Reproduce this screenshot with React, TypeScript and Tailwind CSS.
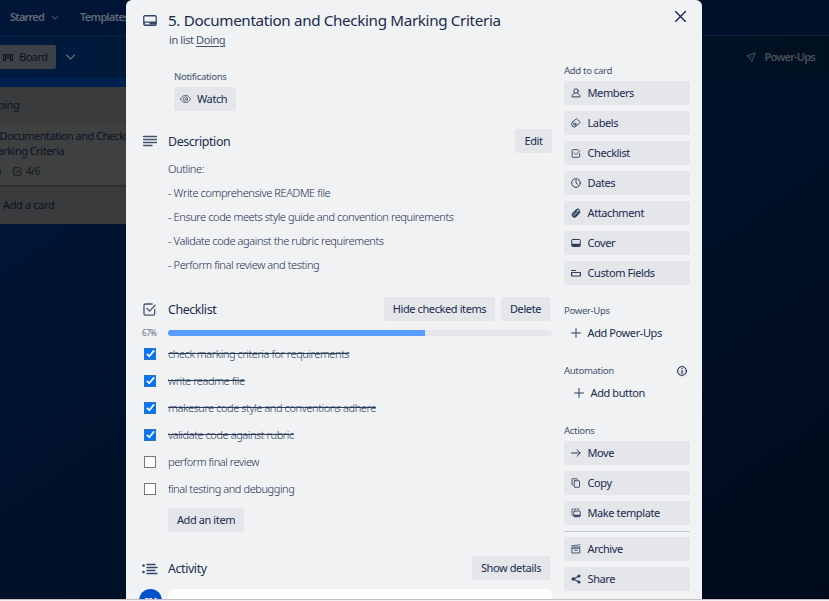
import type { ReactNode } from "react";

type IconProps = { className?: string };

const Svg = ({ children, className = "w-[10px] h-[10px]", box = "0 0 20 20" }: { children: ReactNode; className?: string; box?: string }) => (
  <svg viewBox={box} className={`shrink-0 ${className}`} fill="none" stroke="currentColor" strokeWidth="2" strokeLinejoin="round" strokeLinecap="round">
    {children}
  </svg>
);

const CardIcon = ({ className }: IconProps) => (
  <Svg className={className} box="0 0 28 22">
    <rect x="1.5" y="1.5" width="25" height="19" rx="2.500" strokeWidth="2.600" />
    <path d="M2 13h24v6H2z" fill="currentColor" stroke="none" />
    <rect x="4" y="15.500" width="9" height="3" fill="#f1f2f4" stroke="none" />
  </Svg>
);
const LinesIcon = () => (
  <Svg className="w-[14px] h-[12px]" box="0 0 28 24">
    <path d="M1 3h26M1 9h26M1 15h26M1 21h17" strokeWidth="2.600" />
  </Svg>
);
const ActivityIcon = () => (
  <Svg className="w-[16px] h-[12px]" box="0 0 32 24">
    <path d="M10 3h16M10 9h20M10 15h16M10 21h20" strokeWidth="2.800" />
    <circle cx="3" cy="5" r="2.600" fill="currentColor" stroke="none" />
    <circle cx="3" cy="18" r="2.600" fill="currentColor" stroke="none" />
  </Svg>
);
const CheckIcon = ({ className }: IconProps) => (
  <Svg className={className}>
    <path d="M18 10v6.500a2 2 0 0 1-2 2H3.500a2 2 0 0 1-2-2v-13a2 2 0 0 1 2-2H14" />
    <path d="M6 8.500l4 4 8.500-9" />
  </Svg>
);
const EyeIcon = () => (
  <Svg className="w-[11px] h-[10px]" box="0 0 22 20">
    <path d="M1 10C3 5 7 2.800 11 2.800S19 5 21 10c-2 5-6 7.200-10 7.200S3 15 1 10z" strokeWidth="1.600" />
    <circle cx="11" cy="10" r="4.400" strokeWidth="1.500" />
    <circle cx="11" cy="10" r="1.300" strokeWidth="1.200" />
  </Svg>
);
const MemberIcon = () => (
  <Svg>
    <circle cx="10" cy="6" r="4.500" />
    <path d="M7 10.500C3.500 12 2 14 2 17.800h16c0-3.800-1.500-5.800-5-7.300" />
  </Svg>
);
const LabelIcon = () => (
  <Svg>
    <path d="M3 8l8-6.500 7.500 7-7.500 7.500c-3 3-7 2.500-9-.2C.6 13.500 1 10 3 8z" strokeWidth="1.800" />
    <circle cx="7" cy="12" r="2.200" strokeWidth="1.800" />
    <path d="M8 15.500c3 0 4-2 4-4" strokeWidth="1.300" />
  </Svg>
);
const ClockIcon = () => (
  <Svg>
    <circle cx="10" cy="10" r="8.600" />
    <path d="M10 4.500V10l3.500 3" />
  </Svg>
);
const ClipIcon = () => (
  <Svg>
    <path d="M17.500 8.500l-7.500 8c-4.500 4-10-1.500-6-6l7-7c3.500-3 7.500 1 4.500 4.500l-6.500 7c-2 1.800-4.500-.5-2.700-2.700L12 6.500" strokeWidth="2.300" />
  </Svg>
);
const CoverIcon = () => (
  <Svg>
    <rect x="1.500" y="3" width="17" height="14" rx="1.500" />
    <path d="M2 11.500h16v4.500H2z" fill="currentColor" stroke="none" />
  </Svg>
);
const FieldsIcon = () => (
  <Svg>
    <path d="M1 5h8" strokeWidth="2.400" />
    <path d="M1.200 9h17.600v7H1.200z" strokeWidth="2.400" />
  </Svg>
);
const PlusIcon = () => (
  <Svg>
    <path d="M10 1v18M1 10h18" />
  </Svg>
);
const ArrowIcon = () => (
  <Svg>
    <path d="M1 10h17M12 3.500l6.500 6.500-6.500 6.500" />
  </Svg>
);
const CopyIcon = () => (
  <Svg>
    <path d="M4 14H3a1 1 0 0 1-1-1V2.500a1 1 0 0 1 1-1h9a1 1 0 0 1 1 1" strokeWidth="1.800" />
    <rect x="6.500" y="5.500" width="10.500" height="13" rx="1" strokeWidth="1.800" />
  </Svg>
);
const TemplateIcon = () => (
  <Svg>
    <path d="M2 3V2h2M7 2h3M13 2h3M2 6v3M2 12v2h1" strokeWidth="1.800" />
    <rect x="5.500" y="6" width="13" height="11.500" rx="1.500" strokeWidth="1.800" />
    <path d="M6 13.500h12v3.500H6z" fill="currentColor" stroke="none" />
  </Svg>
);
const ArchiveIcon = () => (
  <Svg>
    <path d="M1.500 3.500L18 1.500" strokeWidth="1.400" />
    <path d="M1.500 6h17M2.500 8.500h15v9.500h-15zM7.500 12.500h5" strokeWidth="1.700" />
  </Svg>
);
const ShareIcon = () => (
  <Svg>
    <path d="M16 4L5 10l11 6" strokeWidth="2.200" />
    <g fill="currentColor" stroke="none">
      <circle cx="16" cy="4" r="3" />
      <circle cx="4.500" cy="10" r="3.500" />
      <circle cx="16" cy="16" r="3" />
    </g>
  </Svg>
);

const ChevronIcon = ({ className }: IconProps) => (
  <Svg className={className} box="0 0 20 12">
    <path d="M2 2l8 8 8-8" strokeWidth="2.400" />
  </Svg>
);

const SideButton = ({ icon, label }: { icon: ReactNode; label: string }) => (
  <button className="flex h-6 w-full items-center rounded-xs bg-[#e4e6ea] pl-[7px] text-left">
    <span className="text-[#2c3e5d]">{icon}</span>
    <span className="ml-[6.500px]">{label}</span>
  </button>
);
const GhostButton = ({ label, className }: { label: string; className: string }) => (
  <button className={`flex h-6 items-center ${className}`}>
    <span className="text-[#2c3e5d]">
      <PlusIcon />
    </span>
    <span className="ml-[6.500px]">{label}</span>
  </button>
);
const SideLabel = ({ children }: { children: ReactNode }) => (
  <h4 className="h-5 text-[9.600px] leading-5 tracking-[-0.35px] text-[#44546f]">{children}</h4>
);
const Button = ({ label, className }: { label: string; className: string }) => (
  <button className={`h-6 shrink-0 whitespace-nowrap rounded-xs bg-[#e4e6ea] text-center ${className}`}>{label}</button>
);

const items = [
  { text: "check marking criteria for requirements", done: true },
  { text: "write readme file", done: true },
  { text: "makesure code style and conventions adhere", done: true },
  { text: "validate code against rubric", done: true },
  { text: "perform final review", done: false },
  { text: "final testing and debugging", done: false },
];
const outline = [
  "Outline:",
  "- Write comprehensive README file",
  "- Ensure code meets style guide and convention requirements",
  "- Validate code against the rubric requirements",
  "- Perform final review and testing",
];

const Board = () => (
  <div className="flex h-full flex-col bg-gradient-to-br from-[#00163b] via-[#001129] to-[#000a1a] text-[11px] tracking-[-0.35px]">
    <header className="flex h-9 shrink-0 items-center border-b border-[#0c213b] bg-gradient-to-r from-[#001638] to-[#001027] pl-[10px] font-semibold text-[#626a76]">
      <span className="tracking-[-0.8px]">Starred</span>
      <ChevronIcon className="ml-[7px] h-[5px] w-[8px]" />
      <span className="ml-[21px] tracking-[-0.7px]">Templates</span>
    </header>
    <div className="flex h-[42px] shrink-0 items-center bg-gradient-to-r from-[#001a3f] to-[#001020]">
      <div className="flex h-6 w-14 items-center rounded-r-xs bg-[#3c4247] pl-[3px] text-[#0b121e]">
        <svg viewBox="0 0 20 14" className="h-[7px] w-[10px]" fill="none" stroke="currentColor" strokeWidth="2">
          <rect x="1" y="1" width="4" height="12" />
          <rect x="8" y="1" width="4" height="8" />
          <rect x="15" y="1" width="4" height="12" />
        </svg>
        <span className="ml-[6px] tracking-[-0.5px]">Board</span>
      </div>
      <ChevronIcon className="ml-[9px] h-[6px] w-[11px] text-[#626a76]" />
      <div className="ml-auto mr-[14px] flex items-center font-semibold text-[#4b5159]">
        <Svg className="mr-[8px] h-[10px] w-[10px]">
          <path d="M18 2L2 8l5 4 4 6z M7 12l4-4" />
        </Svg>
        <span className="tracking-[-0.8px]">Power-Ups</span>
      </div>
    </div>
    <div className="h-[9px] w-[126px] shrink-0 bg-[#002050]" />
    <div className="h-[137px] w-[200px] shrink-0 overflow-hidden bg-[#3a3b3d] text-[#0c1423]">
      <div className="h-[36px] leading-[36px]">
        <span className="-ml-[10px]">Doing</span>
      </div>
      <div className="h-[64px] border-b-2 border-[#2d2e30] bg-[#3f4040] pt-[5px] leading-[15px]">
        <div className="-ml-[11px] whitespace-nowrap tracking-[-0.520px]">5. Documentation and Checking</div>
        <div className="-ml-[12px] tracking-[-0.5px]">Marking Criteria</div>
        <div className="mt-[6px] flex items-center text-[10px] text-[#131820]">
          <span className="mr-3 h-[6px] w-px bg-[#1d2430]" />
          <CheckIcon className="mr-[4px] h-[9px] w-[9px]" />
          4/6
        </div>
      </div>
      <div className="pl-[3px] leading-[35px]">Add a card</div>
    </div>
  </div>
);

const Main = () => (
  <main className="w-[409px] shrink-0">
    <div className="flex h-6 items-center">
      <div className="w-[25px] pb-0.5 text-[#34476a]">
        <CardIcon className="h-[11px] w-[14px]" />
      </div>
      <h2 className="whitespace-nowrap pb-0.5 text-[15.200px] leading-[22px] tracking-[-0.340px]">5. Documentation and Checking Marking Criteria</h2>
    </div>
    <p className="ml-[26px] h-[14px] leading-[14px] text-[#44546f]">
      in list <span className="underline underline-offset-2">Doing</span>
    </p>
    <div className="ml-[31px] mt-[20px]">
      <h3 className="h-[20px] text-[9.600px] leading-[20px] tracking-[-0.35px] text-[#44546f]">Notifications</h3>
      <button className="flex h-6 w-[62px] items-center rounded-xs bg-[#e4e6ea] pl-[6px]">
        <span className="text-[#44546f]">
          <EyeIcon />
        </span>
        <span className="ml-[6px]">Watch</span>
      </button>
    </div>
    <div className="mt-[18px] flex h-6 items-center">
      <div className="w-[25px] text-[#44546f]">
        <LinesIcon />
      </div>
      <h3 className="flex-1 pt-0.5 text-[12.400px]">Description</h3>
      <Button label="Edit" className="w-[37px]" />
    </div>
    <div className="ml-[25px] mt-1 text-[11px] font-[350] tracking-[-0.4px]">
      {outline.map((line) => (
        <p key={line} className="h-6 leading-6">
          {line}
        </p>
      ))}
    </div>
    <div className="mt-5 flex h-6 items-center gap-[6px] pr-[2px]">
      <div className="w-[19px] text-[#44546f]">
        <CheckIcon className="h-[13px] w-[13px]" />
      </div>
      <h3 className="flex-1 pt-0.5 text-[12.400px]">Checklist</h3>
      <Button label="Hide checked items" className="w-[111px]" />
      <Button label="Delete" className="w-[49px]" />
    </div>
    <div className="mt-[7px] flex h-[10px] items-center">
      <span className="-ml-[1px] w-[26px] text-[8px] text-[#626f86]">67%</span>
      <div className="h-[6px] flex-1 overflow-hidden rounded-full bg-[#e4e6ea]">
        <div className="h-full w-[67%] bg-[#579dff]" />
      </div>
    </div>
    <ul className="mt-[2px] text-[11px] font-[350] tracking-[-0.420px]">
      {items.map(({ text, done }) => (
        <li key={text} className="flex h-[27px] items-center">
          <span className={`ml-[1px] mr-[12px] flex h-3 w-3 items-center justify-center border ${done ? "border-[#3471b5] bg-[#0075ff]" : "border-[#767676] bg-white"}`}>
            {done && (
              <svg viewBox="0 0 10 10" className="h-[9px] w-[9px]" fill="none" stroke="white" strokeWidth="1.900">
                <path d="M1 5.400l2.700 2.700L9 1.500" />
              </svg>
            )}
          </span>
          <span className={done ? "pt-0.5 text-[#2c3e5d] line-through" : "pt-0.5"}>{text}</span>
        </li>
      ))}
    </ul>
    <Button label="Add an item" className="ml-[25px] mt-[6px] block w-[76px]" />
    <div className="mt-[24px] flex h-6 items-center pr-[2px]">
      <div className="w-[25px]">
        <div className="-ml-[1px] pt-px text-[#34476a]">
          <ActivityIcon />
        </div>
      </div>
      <h3 className="flex-1 pt-0.5 text-[12.400px]">Activity</h3>
      <Button label="Show details" className="w-[78px]" />
    </div>
    <div className="mt-[9px] flex">
      <div className="-ml-1 mr-[6px] flex h-[23px] w-[23px] items-center justify-center rounded-full bg-[#0052cc] text-[9px] font-bold text-white">SM</div>
      <div className="h-8 flex-1 rounded-md bg-white" />
    </div>
  </main>
);

const Sidebar = () => (
  <aside className="ml-[12px] mt-[61px] w-[126px] shrink-0">
    <SideLabel>Add to card</SideLabel>
    <div className="flex flex-col gap-[6px]">
      <SideButton icon={<MemberIcon />} label="Members" />
      <SideButton icon={<LabelIcon />} label="Labels" />
      <SideButton icon={<CheckIcon className="h-[9px] w-[10px]" />} label="Checklist" />
      <SideButton icon={<ClockIcon />} label="Dates" />
      <SideButton icon={<ClipIcon />} label="Attachment" />
      <SideButton icon={<CoverIcon />} label="Cover" />
      <SideButton icon={<FieldsIcon />} label="Custom Fields" />
    </div>
    <div className="mt-4">
      <SideLabel>Power-Ups</SideLabel>
      <GhostButton label="Add Power-Ups" className="pl-[7px]" />
    </div>
    <div className="mt-4">
      <div className="flex items-center justify-between pr-[2px]">
        <SideLabel>Automation</SideLabel>
        <span className="rounded-full bg-[#e1e4e9] p-px">
          <Svg className="h-[10px] w-[10px]">
            <circle cx="10" cy="10" r="8.800" />
            <path d="M10 9v6M10 5v.5" strokeWidth="2.200" />
          </Svg>
        </span>
      </div>
      <GhostButton label="Add button" className="pl-[10px]" />
    </div>
    <div className="mt-4">
      <SideLabel>Actions</SideLabel>
      <div className="flex flex-col gap-[6px]">
        <SideButton icon={<ArrowIcon />} label="Move" />
        <SideButton icon={<CopyIcon />} label="Copy" />
        <SideButton icon={<TemplateIcon />} label="Make template" />
      </div>
      <div className="mt-[6px] flex flex-col gap-[6px] border-t border-[#c6cbd3] pt-[5px]">
        <SideButton icon={<ArchiveIcon />} label="Archive" />
        <SideButton icon={<ShareIcon />} label="Share" />
      </div>
    </div>
  </aside>
);

export default function App() {
  return (
    <div className="relative flex h-[601px] w-[829px] flex-col overflow-hidden bg-[#f5f1f2] font-['Noto_Sans','Open_Sans',sans-serif]">
      <div className="h-[599px] overflow-hidden">
        <Board />
      </div>
      <div className="h-px bg-[#c9bdc4]" />
      <div className="absolute left-[126px] top-0 flex h-[599px] w-[576px] overflow-hidden rounded-t-md bg-[#f1f2f4] pl-[17px] text-[11px] tracking-[-0.400px] text-[#172b4d]">
        <div className="mt-[9px] flex">
          <Main />
        </div>
        <Sidebar />
        <button className="absolute right-[16px] top-[11px]">
          <Svg className="h-[11px] w-[11px]">
            <path d="M1 1l18 18M19 1L1 19" strokeWidth="2.600" />
          </Svg>
        </button>
      </div>
    </div>
  );
}
